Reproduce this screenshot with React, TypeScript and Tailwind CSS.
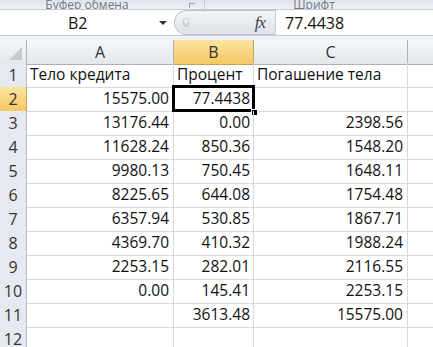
const rows: [string, string, string, string][] = [
    ['1', 'Тело кредита', 'Процент', 'Погашение тела'],
    ['2', '15575.00', '77.4438', ''],
    ['3', '13176.44', '0.00', '2398.56'],
    ['4', '11628.24', '850.36', '1548.20'],
    ['5', '9980.13', '750.45', '1648.11'],
    ['6', '8225.65', '644.08', '1754.48'],
    ['7', '6357.94', '530.85', '1867.71'],
    ['8', '4369.70', '410.32', '1988.24'],
    ['9', '2253.15', '282.01', '2116.55'],
    ['10', '0.00', '145.41', '2253.15'],
    ['11', '', '3613.48', '15575.00'],
    ['12', '', '', ''],
];

const cols = 'grid grid-cols-[27px_147px_80px_154px_1fr]';
const font = { fontFamily: '"Open Sans", "Noto Sans", sans-serif' };

const App: React.FC = () => {
    return (
        <div className="w-[433px] h-[347px] overflow-hidden bg-white text-[#111]" style={font}>
            {/* ribbon edge */}
            <div className="h-[10px] flex bg-gradient-to-b from-[#dfe5ec] to-[#edf1f6] border-b border-[#c3cad3] overflow-hidden text-[12px] text-[#737a83]">
                <div className="w-[205px] flex items-end justify-center relative border-r border-[#c8ced6]">
                    <span className="leading-[18px] -mb-[5px] ml-[-30px]">Буфер обмена</span>
                    <span className="absolute right-[9px] bottom-[1px] w-[6px] h-[5px] border-l border-t border-[#9aa3ad]" />
                </div>
                <div className="flex-1 flex items-end justify-center">
                    <span className="leading-[18px] -mb-[5px] ml-[-10px]">Шрифт</span>
                </div>
            </div>

            {/* formula bar */}
            <div className="h-[26px] flex bg-white border-b border-[#c5ccd4]">
                <div className="w-[174px] flex items-center relative">
                    <span className="ml-[68px] text-[16px]">B2</span>
                    <span className="absolute left-[159px] top-[11px] w-0 h-0 border-l-[4px] border-r-[4px] border-t-[4px] border-l-transparent border-r-transparent border-t-[#333]" />
                </div>
                <div className="w-[101px] flex items-center rounded-l-full bg-gradient-to-b from-[#f3f5f8] to-[#dde2e8] border border-r-0 border-[#b8c0ca]">
                    <span className="ml-[8px] w-[6px] h-[9px] rounded-full bg-gradient-to-b from-[#ffffff] to-[#c8ced6] border border-[#c2c8d0]" />
                    <span className="ml-auto mr-[10px] italic text-[17px] text-[#444] tracking-[-1px]" style={{ fontFamily: '"Liberation Serif", serif' }}>
                        fx
                    </span>
                </div>
                <div className="flex-1 flex items-center border-l border-[#c5ccd4] pl-[9px] text-[16px]">
                    77.4438
                </div>
            </div>

            <div className="h-[4px] bg-[#eef1f5]" />

            {/* column header */}
            <div className={`${cols} h-[23px] text-[16px]`}>
                <div className="flex items-end justify-end pr-[4px] pb-[4px] bg-gradient-to-b from-[#f3f5f8] to-[#e3e7ec] border-r border-b border-[#a9b0b9]">
                    <svg width="13" height="13" viewBox="0 0 13 13">
                        <polygon points="13,0 13,13 0,13" fill="#c5cad0" />
                    </svg>
                </div>
                <div className="flex items-center justify-center bg-gradient-to-b from-[#f5f7fa] to-[#e3e7ec] border-r border-b border-[#a9b0b9] text-[#333]">A</div>
                <div className="flex items-center justify-center bg-gradient-to-b from-[#fbe39f] to-[#f4c85f] border-r border-b border-[#c5a252] text-[#333]">B</div>
                <div className="flex items-center justify-center bg-gradient-to-b from-[#f5f7fa] to-[#e3e7ec] border-r border-b border-[#a9b0b9] text-[#333]">C</div>
                <div className="bg-gradient-to-b from-[#f5f7fa] to-[#e3e7ec] border-b border-[#a9b0b9]" />
            </div>

            {/* rows */}
            {rows.map(([n, a, b, c]) => {
                const sel = n === '2';
                return (
                    <div key={n} className={`${cols} h-[24px] text-[15.5px]`}>
                        <div
                            className={`flex items-center justify-center border-r border-b text-[16px] text-[#333] ${
                                sel
                                    ? 'bg-gradient-to-b from-[#fbe39f] to-[#f4c85f] border-[#c5a252]'
                                    : 'bg-[#e6eaf0] border-[#b5bcc5]'
                            }`}
                        >
                            {n}
                        </div>
                        <div className={`flex items-center border-r border-b border-[#d9d9d9] ${n === '1' ? 'pl-[3px]' : 'justify-end pr-[4px]'}`}>
                            {a}
                        </div>
                        <div className={`relative flex items-center border-r border-b border-[#d9d9d9] ${n === '1' ? 'pl-[3px]' : 'justify-end pr-[3px]'}`}>
                            {b}
                            {sel && (
                                <>
                                    <span className="absolute left-[-2px] top-[-2px] right-[-2px] bottom-[-1px] border-[3px] border-black" />
                                    <span className="absolute right-[-5px] bottom-[-5px] w-[7px] h-[7px] bg-black border border-white" />
                                </>
                            )}
                        </div>
                        <div className={`flex items-center border-r border-b border-[#d9d9d9] ${n === '1' ? 'pl-[3px]' : 'justify-end pr-[4px]'}`}>
                            {c}
                        </div>
                        <div className="border-b border-[#d9d9d9]" />
                    </div>
                );
            })}
        </div>
    );
};

export default App;
